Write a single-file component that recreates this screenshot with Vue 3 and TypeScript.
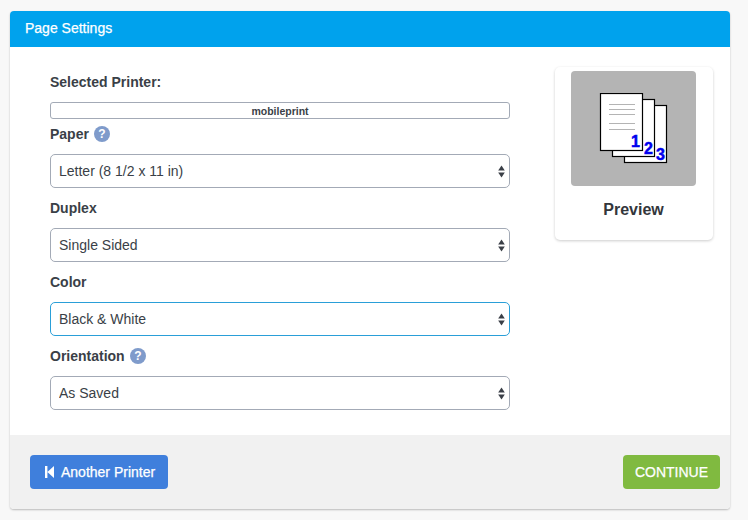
<template>
  <div class="page">
    <div class="panel">
      <div class="panel-header">Page Settings</div>

      <div class="panel-body">
        <form class="settings" @submit.prevent>
          <div class="printer-label">Selected Printer:</div>
          <div class="printer-name">mobileprint</div>

          <div v-for="campo in campos" :key="campo.nombre" class="campo">
            <label class="campo-label">
              {{ campo.nombre }}
              <svg v-if="campo.ayuda" class="ayuda" viewBox="0 0 16 16" width="16" height="16">
                <circle cx="8" cy="8" r="8" fill="#7f9bcb" />
                <text x="8" y="12.4" text-anchor="middle" class="ayuda-texto">?</text>
              </svg>
            </label>
            <div class="select-wrap">
              <select v-model="campo.valor" :class="{ activo: campo.activo }">
                <option v-for="op in campo.opciones" :key="op">{{ op }}</option>
              </select>
              <svg class="flechas" viewBox="0 0 7 13" width="7" height="13">
                <path d="M3.5 0.5 L6.8 5.6 H0.2 Z" fill="#3a3f47" />
                <path d="M3.5 12.5 L6.8 7.4 H0.2 Z" fill="#3a3f47" />
              </svg>
            </div>
          </div>
        </form>

        <aside class="preview">
          <div class="preview-img">
            <svg viewBox="0 0 70 72" width="70" height="72">
              <rect x="25.5" y="12.5" width="42" height="57" fill="#fff" stroke="#000" stroke-width="1.2" />
              <text x="66" y="66.5" text-anchor="end" class="num">3</text>
              <rect x="13.5" y="6.5" width="42" height="57" fill="#fff" stroke="#000" stroke-width="1.2" />
              <text x="54" y="60.5" text-anchor="end" class="num">2</text>
              <rect x="1.5" y="0.5" width="42" height="57" fill="#fff" stroke="#000" stroke-width="1.2" />
              <path d="M10 11.5 H36 M10 16.5 H36 M10 21.5 H36 M10 30.5 H36 M10 36.5 H36" stroke="#b4b4b4" stroke-width="1" />
              <text x="41" y="54" text-anchor="end" class="num">1</text>
            </svg>
          </div>
          <div class="preview-titulo">Preview</div>
        </aside>
      </div>

      <div class="panel-footer">
        <button type="button" class="btn btn-azul">
          <svg viewBox="0 0 9 12" width="9" height="12">
            <path d="M0 0 H2.4 V12 H0 Z M9 0 V12 L2.4 6 Z" fill="#fff" />
          </svg>
          Another Printer
        </button>
        <button type="button" class="btn btn-verde">CONTINUE</button>
      </div>
    </div>
  </div>
</template>

<script setup lang="ts">
import { reactive } from 'vue'

interface Campo {
  nombre: string
  valor: string
  opciones: string[]
  ayuda?: boolean
  activo?: boolean
}

const campos = reactive<Campo[]>([
  {
    nombre: 'Paper',
    valor: 'Letter (8 1/2 x 11 in)',
    opciones: ['Letter (8 1/2 x 11 in)', 'Legal (8 1/2 x 14 in)', 'A4'],
    ayuda: true,
  },
  {
    nombre: 'Duplex',
    valor: 'Single Sided',
    opciones: ['Single Sided', 'Double Sided'],
  },
  {
    nombre: 'Color',
    valor: 'Black & White',
    opciones: ['Black & White', 'Color'],
    activo: true,
  },
  {
    nombre: 'Orientation',
    valor: 'As Saved',
    opciones: ['As Saved', 'Portrait', 'Landscape'],
    ayuda: true,
  },
])
</script>

<style>
html,
body {
  background: #f8f8f8;
}
</style>

<style scoped>
.page {
  width: 748px;
  height: 520px;
  padding: 11px 18px 11px 10px;
  box-sizing: border-box;
  font-family: "Liberation Sans", Arial, sans-serif;
  color: #3a3f47;
}

.panel {
  height: 498px;
  display: flex;
  flex-direction: column;
  background: #fff;
  border-radius: 4px;
  overflow: hidden;
  box-shadow: 0 1px 2px rgba(0, 0, 0, 0.25);
}

.panel-header {
  height: 36px;
  line-height: 34px;
  padding-left: 15px;
  background: #00a2ed;
  color: #fff;
  font-size: 14px;
  -webkit-text-stroke: 0.25px #fff;
}

.panel-body {
  flex: 1;
  display: flex;
  align-items: flex-start;
  padding: 20px 17px 0 40px;
  justify-content: space-between;
}

.settings {
  width: 460px;
}

.printer-label {
  height: 35px;
  padding-top: 7px;
  box-sizing: border-box;
  font-size: 14px;
  font-weight: bold;
}

.printer-name {
  height: 17px;
  line-height: 16px;
  box-sizing: border-box;
  border: 1px solid #a3aab6;
  border-radius: 3px;
  text-align: center;
  font-size: 10.5px;
  font-weight: bold;
}

.campo {
  margin-top: 5px;
  height: 69px;
}

.campo-label {
  display: flex;
  align-items: center;
  gap: 5px;
  height: 21px;
  padding-bottom: 1px;
  box-sizing: border-box;
  margin-bottom: 9px;
  font-size: 14px;
  font-weight: bold;
}

.ayuda-texto {
  font-size: 12px;
  font-weight: bold;
  fill: #fff;
  font-family: "Liberation Sans", Arial, sans-serif;
}

.select-wrap {
  position: relative;
  height: 34px;
}

select {
  appearance: none;
  width: 100%;
  height: 34px;
  padding: 0 24px 0 8px;
  box-sizing: border-box;
  background: #fff;
  border: 1px solid #a3aab6;
  border-radius: 5px;
  font-family: inherit;
  font-size: 14px;
  color: #3a3f47;
  outline: none;
}

select.activo {
  border-color: #2a9fd8;
}

.flechas {
  position: absolute;
  right: 5px;
  top: 11px;
  pointer-events: none;
}

.preview {
  width: 158px;
  height: 173px;
  box-sizing: border-box;
  padding: 4px 17px 0 16px;
  background: #fff;
  border-radius: 5px;
  box-shadow: 0 1px 3px rgba(0, 0, 0, 0.2);
}

.preview-img {
  height: 115px;
  display: flex;
  align-items: center;
  justify-content: center;
  background: #b4b4b4;
  border-radius: 4px;
}

.num {
  font-family: "Liberation Sans", Arial, sans-serif;
  font-size: 16px;
  font-weight: bold;
  fill: #0000ee;
  stroke: #0000ee;
  stroke-width: 0.5px;
}

.preview-titulo {
  margin-top: 15px;
  text-align: center;
  font-size: 16px;
  font-weight: bold;
  color: #33363b;
}

.panel-footer {
  height: 74px;
  display: flex;
  align-items: center;
  justify-content: space-between;
  padding: 0 10px 0 20px;
  background: #f1f1f1;
}

.btn {
  height: 34px;
  display: flex;
  align-items: center;
  border: none;
  border-radius: 4px;
  color: #fff;
  font-family: inherit;
  font-size: 14px;
  -webkit-text-stroke: 0.25px #fff;
}

.btn-azul {
  width: 138px;
  padding: 0 0 0 15px;
  gap: 7px;
  background: #3f7fdc;
}

.btn-verde {
  width: 97px;
  justify-content: center;
  padding: 0;
  background: #80ba40;
}
</style>
